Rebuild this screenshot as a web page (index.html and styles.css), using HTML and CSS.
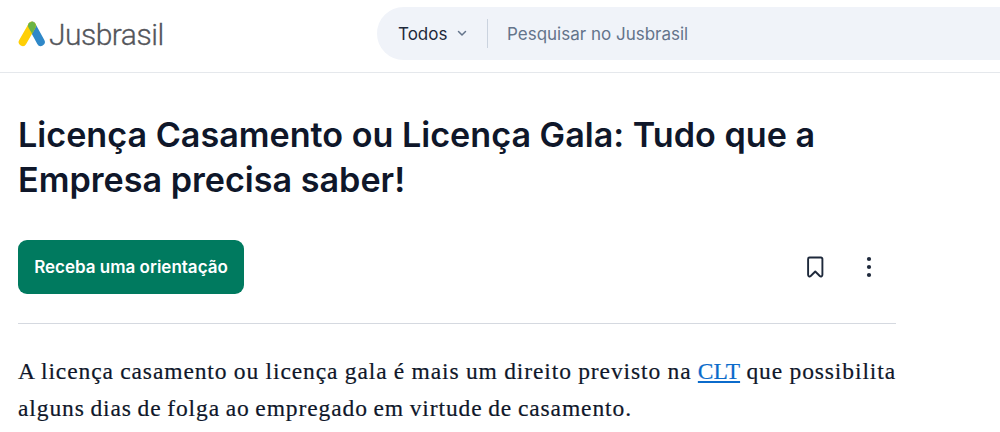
FILE: index.html
```html
<!DOCTYPE html>
<html lang="pt-BR">
  <head>
    <meta charset="utf-8">
    <title>Licença Casamento ou Licença Gala: Tudo que a Empresa precisa saber!</title>
    <link rel="stylesheet" href="styles.css">
  </head>
  <body>
    <header class="topbar">
      <a class="logo" href="#">
        <svg class="logo-mark" width="28" height="26" viewBox="0 0 28 26">
          <path d="M14 4.8 22.8 21" stroke="#2f88c8" stroke-width="8" stroke-linecap="round"/>
          <path d="M14 4.8 4.7 21" stroke="#ffcf06" stroke-width="8" stroke-linecap="round"/>
          <path d="M10 4.8a4 4 0 0 1 7.700-1.500q.5 1.700-.2 3.200L14 12.800 10.500 6.600q-.5-.9-.5-1.800z" fill="#6ab445"/>
        </svg>
        <span class="logo-name">Jusbrasil</span>
      </a>
      <div class="search">
        <button class="search-scope">
          Todos
          <svg width="10" height="7" viewBox="0 0 10 7" fill="none" stroke="#64748b" stroke-width="1.5" stroke-linecap="round" stroke-linejoin="round">
            <path d="M1.5 1.5 5 5l3.5-3.5"/>
          </svg>
        </button>
        <input class="search-input" type="text" placeholder="Pesquisar no Jusbrasil">
      </div>
    </header>
    <main class="article">
      <h1 class="title">Licença Casamento ou Licença Gala: Tudo que a Empresa precisa saber!</h1>
      <div class="toolbar">
        <button class="cta">Receba uma orientação</button>
        <div class="actions">
          <button class="icon-button" aria-label="Salvar">
            <svg width="18" height="22" viewBox="0 0 18 22" fill="none" stroke="#1e293b" stroke-width="1.9" stroke-linejoin="round">
              <path d="M3.5 1.500h11.500a1.400 1.400 0 0 1 1.400 1.400v15.900c0 1.400-1.500 2.200-2.600 1.200L9.250 15.500 4.700 20c-1.100 1-2.600.2-2.600-1.200V2.900a1.400 1.400 0 0 1 1.400-1.400z"/>
            </svg>
          </button>
          <button class="icon-button" aria-label="Mais opções">
            <svg width="6" height="22" viewBox="0 0 6 22" fill="#1e293b">
              <circle cx="3" cy="3" r="2.1"/>
              <circle cx="3" cy="11" r="2.1"/>
              <circle cx="3" cy="19" r="2.1"/>
            </svg>
          </button>
        </div>
      </div>
      <p class="text">
        <span class="line">A licença casamento ou licença gala é mais um direito previsto na <a href="#">CLT</a> que possibilita</span>
        <span class="line-last">alguns dias de folga ao empregado em virtude de casamento.</span>
      </p>
    </main>
  </body>
</html>
```

FILE: styles.css
```css
* {
  box-sizing: border-box;
}
body {
  margin: 0;
  overflow: hidden;
  background: #fff;
  color: #0f172a;
  font-family: Inter, "Liberation Sans", sans-serif;
}
button, input {
  padding: 0;
  border: none;
  background: none;
  font-family: inherit;
}

/* header */
.topbar {
  display: flex;
  height: 73px;
  padding-top: 7px;
  padding-left: 18px;
  border-bottom: 1px solid #e5e8ec;
}
.logo {
  display: flex;
  width: 359px;
  height: 53px;
  align-items: center;
  text-decoration: none;
}
.logo-mark {
  flex: none;
  fill: none;
}
.logo-name {
  margin-left: 3px;
  padding-top: 2px;
  color: #54565b;
  font-family: Roboto, sans-serif;
  font-size: 30px;
  font-weight: 300;
  letter-spacing: -0.5px;
  -webkit-text-stroke: 0.3px #54565b;
}
.search {
  display: flex;
  flex: 1;
  height: 53px;
  align-items: center;
  border-radius: 27px 0 0 27px;
  background: #f0f3f9;
}
.search-scope {
  display: flex;
  width: 111px;
  height: 29px;
  padding-left: 21px;
  align-items: center;
  gap: 10px;
  border-right: 1px solid #cbd3df;
  color: #1e293b;
  font-size: 17px;
}
.search-input {
  flex: 1;
  margin-left: 19px;
  font-size: 17px;
}
.search-input::placeholder {
  color: #64748b;
}

/* article */
.article {
  width: 896px;
  padding: 39px 0 0 18px;
}
.title {
  margin: 0;
  font-size: 34.15px;
  font-weight: 600;
  line-height: 45px;
}
.toolbar {
  display: flex;
  height: 122px;
  padding-top: 38px;
  align-items: flex-start;
  justify-content: space-between;
  border-bottom: 1px solid #d5d9e0;
}
.cta {
  width: 226px;
  height: 54px;
  border-radius: 9px;
  background: #007a5f;
  color: #fff;
  font-size: 17px;
  font-weight: 600;
}
.actions {
  display: flex;
}
.icon-button {
  display: flex;
  width: 54px;
  height: 54px;
  align-items: center;
  justify-content: center;
}

/* text */
.text {
  margin: 29px 0 0;
  font-family: Georgia, "Liberation Serif", serif;
  font-size: 23.5px;
  line-height: 37px;
  -webkit-text-stroke: 0.2px;
}
.line, .line-last {
  display: block;
  white-space: nowrap;
  letter-spacing: 0.9px;
  word-spacing: -1.1px;
}
.line {
  text-align-last: justify;
}
.text a {
  color: #0b6bcb;
  letter-spacing: 0;
}
```
